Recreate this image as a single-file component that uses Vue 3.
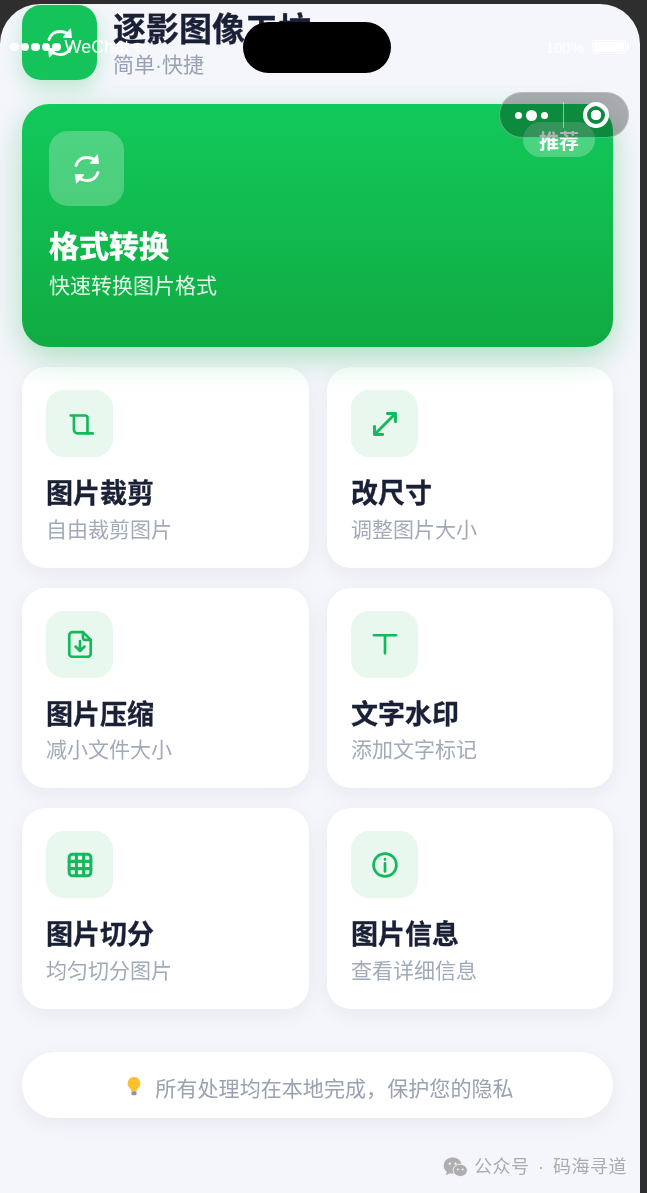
<script setup>
const cards = [
  { icon: 'crop', title: '图片裁剪', sub: '自由裁剪图片' },
  { icon: 'resize', title: '改尺寸', sub: '调整图片大小' },
  { icon: 'file', title: '图片压缩', sub: '减小文件大小' },
  { icon: 'text', title: '文字水印', sub: '添加文字标记' },
  { icon: 'grid', title: '图片切分', sub: '均匀切分图片' },
  { icon: 'info', title: '图片信息', sub: '查看详细信息' },
]
</script>

<template>
  <div class="stage">
    <div class="phone">
      <header class="head">
        <div class="logo">
          <svg class="sync" viewBox="0 0 24 24" width="30" height="30">
            <path d="M3.200 9.200C4.500 5 8 2.800 11.600 2.800c2.900 0 5.900 1 8 2.800M20.800 14.800C19.500 19 16 21.200 12.400 21.200c-2.900 0-5.900-1-8-2.800"/>
            <path class="tri" d="M20.400 1 21 7.600l-6.200-.2zM3.600 23 3 16.400l6.200.2z"/>
          </svg>
        </div>
        <div class="brand">
          <div class="brand-name">逐影图像工坊</div>
          <div class="brand-sub">简单·快捷</div>
        </div>
      </header>

      <section class="hero">
        <span class="badge">推荐</span>
        <div class="hero-icon">
          <svg class="sync" viewBox="0 0 24 24" width="30" height="30">
            <path d="M3.200 9.200C4.500 5 8 2.800 11.600 2.800c2.900 0 5.900 1 8 2.800M20.800 14.800C19.500 19 16 21.200 12.400 21.200c-2.900 0-5.900-1-8-2.800"/>
            <path class="tri" d="M20.400 1 21 7.600l-6.200-.2zM3.600 23 3 16.400l6.200.2z"/>
          </svg>
        </div>
        <h1 class="hero-title">格式转换</h1>
        <p class="hero-sub">快速转换图片格式</p>
      </section>

      <section class="grid">
        <article v-for="c in cards" :key="c.title" class="card">
          <div class="card-icon">
            <svg viewBox="0 0 24 24" width="28" height="28" class="ico">
              <template v-if="c.icon === 'crop'"><path d="M4 4.700h12.400a2 2 0 0 1 2 2V20"/><path d="M6.800 4.700V17a3.100 3.100 0 0 0 3.100 3.100H23"/></template>
              <template v-else-if="c.icon === 'resize'"><path class="mid" d="M3 21 21 3M14 3h7v7M3 14v7h7"/></template>
              <template v-else-if="c.icon === 'file'"><path d="M14.500 1.800H5.500a2.700 2.700 0 0 0-2.700 2.700v15.800a2.700 2.700 0 0 0 2.700 2.700h13a2.700 2.700 0 0 0 2.700-2.700V8.500z"/><path d="M14.500 1.800v4.700a2 2 0 0 0 2 2h4.700M12 9.500V18M8.200 14.200 12 18l3.800-3.800"/></template>
              <template v-else-if="c.icon === 'text'"><path d="M2.500 4.500h19M12 4.500V20"/></template>
              <template v-else-if="c.icon === 'grid'"><g class="thick"><rect x="2.700" y="2.700" width="18.600" height="18.600" rx="3"/><path d="M2.700 8.900h18.600M2.700 15.100h18.600M8.900 2.700v18.600M15.100 2.700v18.600"/></g></template>
              <template v-else><circle cx="12" cy="12" r="9.800"/><path d="M12 10.500v7M12 7v.2"/></template>
            </svg>
          </div>
          <h2 class="card-title">{{ c.title }}</h2>
          <p class="card-sub">{{ c.sub }}</p>
        </article>
      </section>

      <div class="tip">
        <svg class="bulb" viewBox="0 0 20 26" width="16" height="21">
          <path d="M10 1a8 8 0 0 0-5 14.200c1 .9 1.600 2 1.700 3.300h6.600c.1-1.300.7-2.400 1.700-3.300A8 8 0 0 0 10 1z" fill="#fdc02f"/>
          <rect x="6.800" y="19" width="6.400" height="5" rx="1.500" fill="#8f959e"/>
        </svg>
        <span>所有处理均在本地完成，保护您的隐私</span>
      </div>

      <div class="mark">
        <svg viewBox="0 0 26 22" width="25" height="21"><ellipse cx="10" cy="9" rx="9.500" ry="8.500" fill="#aeaeae"/><path d="M4 15l-1 4 5-2.500z" fill="#aeaeae"/><ellipse cx="18" cy="14" rx="7.500" ry="6.500" fill="#aeaeae" stroke="#f5f6fb"/><circle cx="7" cy="7" r="1.200" fill="#f5f6fb"/><circle cx="13" cy="7" r="1.200" fill="#f5f6fb"/><circle cx="15.500" cy="13" r="1" fill="#f5f6fb"/><circle cx="20.500" cy="13" r="1" fill="#f5f6fb"/></svg>
        <span>公众号 · 码海寻道</span>
      </div>

      <div class="status">
        <span class="dots"><i></i><i></i><i></i><i></i><i></i></span>
        <span class="carrier">WeChat</span>
        <svg class="wifi" viewBox="0 0 16 12" width="15" height="11"><path d="M1 4.500a10 10 0 0 1 14 0M3.500 7a6.500 6.500 0 0 1 9 0M6 9.300a3 3 0 0 1 4 0" /></svg>
        <span class="pct">100%</span>
        <span class="battery"><b></b></span>
      </div>
      <div class="notch"></div>
      <div class="capsule">
        <span class="more"><i></i><i class="big"></i><i></i></span>
        <span class="sep"></span>
        <span class="target"></span>
      </div>
    </div>
  </div>
</template>

<style>
html, body { margin: 0; background: #2e2e2e; }
</style>

<style scoped>
.stage {
  width: 647px;
  height: 1193px;
  padding-top: 4px;
  box-sizing: border-box;
  background: #2e2e2e;
  overflow: hidden;
  font-family: "Noto Sans CJK SC", "Noto Sans", sans-serif;
  filter: blur(0.5px);
}
.phone {
  position: relative;
  width: 640px;
  height: 1189px;
  box-sizing: border-box;
  padding: 1px 27px 0 22px;
  background: #f5f6fb;
  border-radius: 40px 40px 0 0;
  overflow: hidden;
}
.head { display: flex; align-items: flex-start; gap: 16px; height: 75px; }
.logo {
  width: 75px;
  height: 75px;
  border-radius: 19px;
  background: #14c45a;
  box-shadow: 0 8px 20px rgba(20, 196, 90, 0.25);
  display: flex;
  align-items: center;
  justify-content: center;
  flex: none;
}
.sync { fill: none; stroke: #fff; stroke-width: 2.3; stroke-linecap: round; stroke-linejoin: round; }
.sync .tri { fill: #fff; stroke-width: 1; }
.brand-name { font-size: 33px; line-height: 43px; font-weight: 700; color: #1a2036; white-space: nowrap; margin-top: 1px; -webkit-text-stroke: 0.3px #1a2036; }
.brand-sub { margin-top: 2px; font-family: "Liberation Sans", "Noto Sans CJK SC", sans-serif; font-size: 21px; line-height: 28px; color: #98a2b3; }

.hero {
  position: relative;
  margin-top: 24px;
  height: 243px;
  box-sizing: border-box;
  padding: 27px;
  border-radius: 27px;
  background: linear-gradient(180deg, #12c95b 0%, #10ab42 100%);
  box-shadow: 0 10px 32px rgba(16, 170, 70, 0.32);
  color: #fff;
}
.badge {
  position: absolute;
  top: 18px;
  right: 18px;
  width: 72px;
  height: 35px;
  border-radius: 18px;
  background: rgba(255, 255, 255, 0.25);
  font-size: 20px;
  line-height: 37px;
  font-weight: 700;
  text-align: center;
}
.hero-icon {
  width: 75px;
  height: 75px;
  border-radius: 19px;
  background: rgba(255, 255, 255, 0.25);
  display: flex;
  align-items: center;
  justify-content: center;
}
.hero-title { margin: 17px 0 0; font-size: 30px; line-height: 42px; font-weight: 700; -webkit-text-stroke: 0.5px #fff; }
.hero-sub { margin: 4px 0 0; font-size: 21px; line-height: 30px; color: rgba(255, 255, 255, 0.88); }

.grid {
  margin-top: 20px;
  display: grid;
  grid-template-columns: 287px 286px;
  column-gap: 18px;
  row-gap: 20px;
}
.card {
  height: 200.5px;
  box-sizing: border-box;
  padding: 23px 24px;
  background: #fff;
  border-radius: 24px;
  box-shadow: 0 6px 20px rgba(30, 40, 80, 0.06);
}
.card-icon {
  width: 67px;
  height: 67px;
  border-radius: 18px;
  background: #e9f8ef;
  display: flex;
  align-items: center;
  justify-content: center;
}
.ico { fill: none; stroke: #14b95c; stroke-width: 2.3; stroke-linecap: round; stroke-linejoin: round; }
.ico .mid { stroke-width: 2.5; }
.ico .thick { stroke-width: 2.6; }
.card-title { margin: 16px 0 0; font-size: 27px; line-height: 38px; font-weight: 700; color: #1a2036; -webkit-text-stroke: 0.3px #1a2036; }
.card-sub { margin: 1.5px 0 0; font-size: 21px; line-height: 30px; color: #a0aab8; }

.tip {
  margin-top: 43.5px;
  height: 66px;
  box-sizing: border-box;
  padding: 4px 0 0 5px;
  border-radius: 33px;
  background: #fff;
  box-shadow: 0 6px 20px rgba(30, 40, 80, 0.06);
  display: flex;
  align-items: center;
  justify-content: center;
  gap: 13px;
  font-size: 21px;
  letter-spacing: 0.08px;
  color: #98a2b3;
}
.bulb { flex: none; margin-top: -1px; }
.mark {
  position: absolute;
  right: 13px;
  top: 1150px;
  display: flex;
  align-items: center;
  gap: 6px;
  font-family: "Liberation Sans", "Noto Sans CJK SC", sans-serif;
  font-size: 18px;
  letter-spacing: 0.5px;
  word-spacing: 3px;
  line-height: 26px;
  color: #acacac;
  white-space: nowrap;
}

.status {
  position: absolute;
  top: 31px;
  left: 10px;
  right: 12px;
  height: 24px;
  display: flex;
  align-items: center;
  color: #fff;
  font-family: "Liberation Sans", sans-serif;
}
.dots { display: flex; gap: 2px; }
.dots i { width: 8.5px; height: 8.5px; border-radius: 50%; background: #fff; }
.carrier { margin-left: 4px; font-size: 18px; }
.wifi { margin-left: 1px; fill: none; stroke: #fff; stroke-width: 1.5; }
.pct { margin-left: auto; font-size: 15px; opacity: 0.85; margin-right: 8px; }
.battery {
  position: relative;
  width: 34px;
  height: 14px;
  margin-right: 2px;
  box-sizing: border-box;
  border: 1.5px solid #fff;
  border-radius: 3px;
  padding: 1px;
  display: flex;
}
.battery::after {
  content: "";
  position: absolute;
  right: -4px;
  top: 2.5px;
  width: 2px;
  height: 6px;
  background: #fff;
  border-radius: 0 1px 1px 0;
}
.battery b { flex: 1; background: #fff; border-radius: 1px; }
.notch {
  position: absolute;
  top: 18px;
  left: 243px;
  width: 148px;
  height: 51px;
  border-radius: 26px;
  background: #000;
}
.capsule {
  position: absolute;
  top: 88px;
  left: 499px;
  width: 130px;
  height: 46px;
  box-sizing: border-box;
  border-radius: 23px;
  border: 1px solid rgba(200, 200, 200, 0.5);
  background: rgba(0, 0, 0, 0.3);
  display: flex;
  align-items: center;
}
.more { width: 63px; display: flex; align-items: center; justify-content: center; gap: 4px; }
.more i { width: 7px; height: 7px; border-radius: 50%; background: #fff; }
.more i.big { width: 11px; height: 11px; }
.sep { width: 1px; height: 26px; background: rgba(255, 255, 255, 0.5); }
.target {
  margin-left: 19px;
  width: 26px;
  height: 26px;
  box-sizing: border-box;
  border-radius: 50%;
  border: 4px solid #fff;
  background: radial-gradient(circle, #fff 0 5px, transparent 5.5px);
}
</style>
